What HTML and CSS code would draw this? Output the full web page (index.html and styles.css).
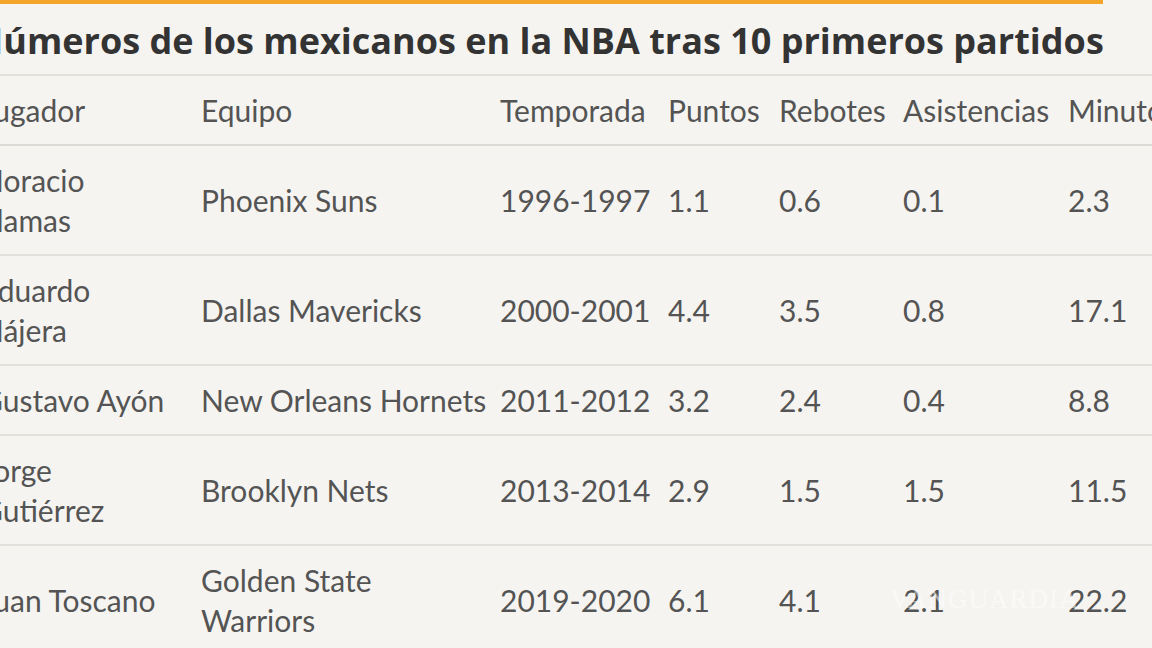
FILE: index.html
```html
<!DOCTYPE html>
<html lang="es">
<head>
<meta charset="utf-8">
<link rel="stylesheet" href="styles.css">
</head>
<body>
<div class="page">
<div class="frame">
  <div class="topbar"></div>
  <h1 class="title">Números de los mexicanos en la NBA tras 10 primeros partidos</h1>
  <table class="stats">
    <colgroup>
      <col class="c1"><col class="c2"><col class="c3"><col class="c4"><col class="c5"><col class="c6"><col class="c7">
    </colgroup>
    <thead>
      <tr><th>Jugador</th><th>Equipo</th><th>Temporada</th><th>Puntos</th><th>Rebotes</th><th>Asistencias</th><th>Minutos</th></tr>
    </thead>
    <tbody>
      <tr><td>Horacio<br>Llamas</td><td>Phoenix Suns</td><td>1996-1997</td><td>1.1</td><td>0.6</td><td>0.1</td><td>2.3</td></tr>
      <tr><td>Eduardo<br>Nájera</td><td>Dallas Mavericks</td><td>2000-2001</td><td>4.4</td><td>3.5</td><td>0.8</td><td>17.1</td></tr>
      <tr><td>Gustavo Ayón</td><td>New Orleans Hornets</td><td>2011-2012</td><td>3.2</td><td>2.4</td><td>0.4</td><td>8.8</td></tr>
      <tr><td>Jorge<br>Gutiérrez</td><td>Brooklyn Nets</td><td>2013-2014</td><td>2.9</td><td>1.5</td><td>1.5</td><td>11.5</td></tr>
      <tr><td>Juan Toscano</td><td>Golden State<br>Warriors</td><td>2019-2020</td><td>6.1</td><td>4.1</td><td>2.1</td><td>22.2</td></tr>
    </tbody>
  </table>
  <div class="watermark">VANGUARDIA</div>
</div>
</div>
</body>
</html>
```

FILE: styles.css
```css
html, body {
  margin: 0;
  padding: 0;
  background: #f6f4f1;
  overflow: hidden;
}
body {
  font-family: Lato, "Open Sans", sans-serif;
  color: #545454;
}
.page {
  width: 1152px;
  height: 648px;
  overflow: hidden;
}
.frame {
  position: relative;
  margin-left: -19px;
  width: 1244px;
}
.topbar {
  height: 4px;
  width: 1122px;
  background: #f4a62a;
}
.title {
  margin: 0;
  padding: 17px 0 13px 0;
  font-family: "Open Sans", Lato, sans-serif;
  font-size: 36px;
  line-height: 40px;
  font-weight: 700;
  color: #333333;
  border-bottom: 2px solid #e4e1dd;
  white-space: nowrap;
  text-indent: -7px;
}
.stats {
  border-collapse: collapse;
  table-layout: fixed;
  width: 1244px;
  font-size: 30px;
  line-height: 40px;
}
.c1 { width: 220px; }
.c2 { width: 299px; }
.c3 { width: 168px; }
.c4 { width: 111px; }
.c5 { width: 124px; }
.c6 { width: 165px; }
.c7 { width: 157px; }
.stats th, .stats td {
  text-align: left;
  font-weight: 400;
  padding: 14px 0;
  vertical-align: middle;
  white-space: nowrap;
}
.stats th {
  padding: 14px 0 14px;
  border-bottom: 2px solid #dedbd7;
}
.stats td {
  border-bottom: 2px solid #e4e1dd;
}
.watermark {
  position: absolute;
  left: 909px;
  top: 584px;
  font-family: "Liberation Serif", serif;
  font-size: 27px;
  letter-spacing: 1px;
  color: rgba(255, 255, 255, 0.5);
}
```
